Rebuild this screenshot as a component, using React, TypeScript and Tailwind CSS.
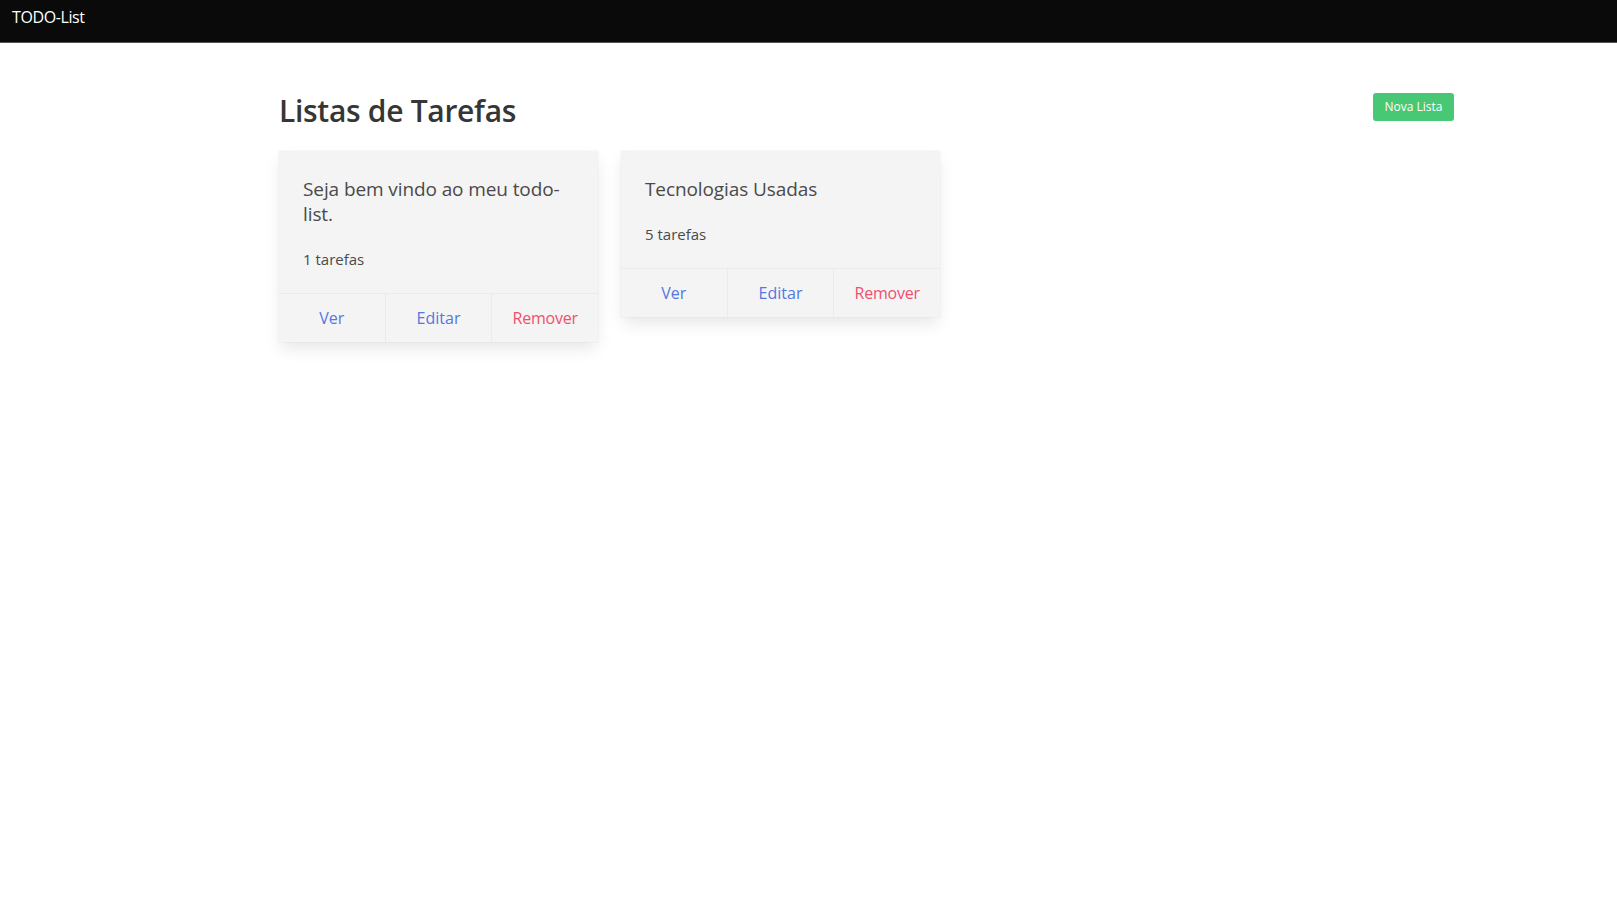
import React from 'react';

interface TodoList {
  id: number;
  title: string;
  count: number;
}

const lists: TodoList[] = [
  { id: 1, title: 'Seja bem vindo ao meu todo-list.', count: 1 },
  { id: 2, title: 'Tecnologias Usadas', count: 5 },
];

function ListCard({ list }: { list: TodoList }) {
  return (
    <div className="w-[319px] bg-[#f4f4f4] shadow-[0_8px_16px_-2px_rgba(10,10,10,0.1),0_0_0_1px_rgba(10,10,10,0.02)] self-start">
      <div className="px-6 pt-[26px] pb-6">
        <p className="text-[19px] leading-[25px] text-[#4a4a4a] tracking-[-0.1px]">{list.title}</p>
        <p className="mt-[22px] text-[15px] leading-5 text-[#4a4a4a]">{list.count} tarefas</p>
      </div>
      <div className="flex border-t border-[#ebebeb] text-[16px] leading-6">
        <a className="flex-1 py-3 text-center text-[#5577e0] cursor-pointer">Ver</a>
        <a className="flex-1 py-3 text-center text-[#5577e0] border-l border-[#ebebeb] cursor-pointer">Editar</a>
        <a className="flex-1 py-3 text-center text-[#f14f6e] border-l border-[#ebebeb] cursor-pointer tracking-[-0.2px]">Remover</a>
      </div>
    </div>
  );
}

export default function App() {
  return (
    <div className="min-h-screen bg-white font-['Open_Sans',sans-serif]">
      {/* Navbar */}
      <nav className="h-[43px] bg-[#0a0a0a] border-b border-[#555] px-3 pt-[5px]">
        <span className="text-white text-[16px] leading-6 tracking-[-0.4px]">TODO-List</span>
      </nav>

      <main className="ml-[279px] w-[1175px] pt-[48px]">
        <div className="flex items-start justify-between">
          <h1 className="text-[30px] leading-[40px] font-semibold text-[#363636] tracking-[-0.3px]">Listas de Tarefas</h1>
          <button className="h-[28px] w-[81px] bg-[#48c774] text-white text-[12px] rounded-[3px] mt-[2px]">
            Nova Lista
          </button>
        </div>

        <div className="mt-[20px] flex gap-[23px]">
          {lists.map((list) => (
            <ListCard key={list.id} list={list} />
          ))}
        </div>
      </main>
    </div>
  );
}
